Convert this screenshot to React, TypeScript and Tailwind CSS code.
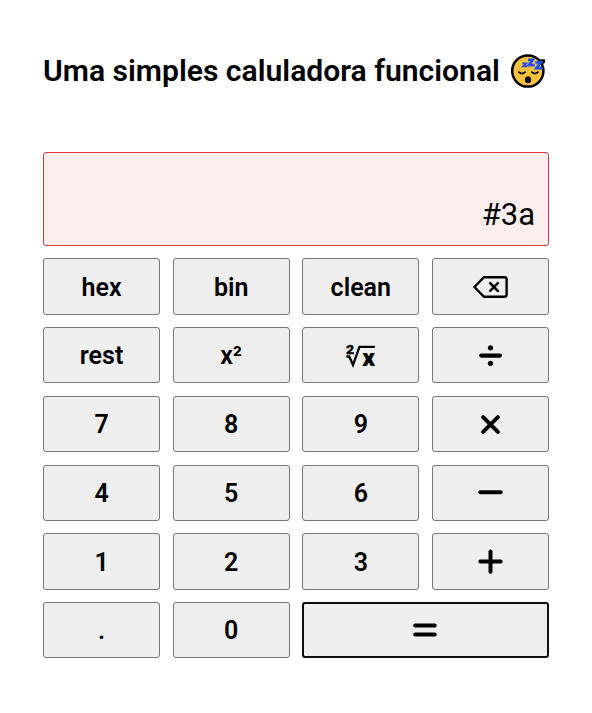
import React from "react";

const keyClass =
  "flex items-center justify-center rounded-[3px] border border-[#767676] bg-[#efefef] pt-[1.5px] text-[25px] leading-none font-semibold text-black";

const line = {
  fill: "none",
  stroke: "currentColor",
  strokeWidth: 4,
  strokeLinecap: "round" as const,
  strokeLinejoin: "round" as const,
};

function SleepingFace() {
  return (
    <svg className="size-9 shrink-0" viewBox="0 0 36 36">
      <circle cx="17.8" cy="18" r="15.6" fill="#fbc13a" stroke="#000" strokeWidth="2.5" />
      <path d="M30 6.3h4.9v3l-1.4 1.6z" fill="#000" />
      <path d="M8.9 19.2q3.1 2.8 6.2 0M21.9 19.2q3.1 2.8 6.2 0" fill="none" stroke="#000" strokeWidth="1.8" strokeLinecap="round" />
      <ellipse cx="18" cy="26.8" rx="3.1" ry="3.5" fill="#000" />
      <g fill="none" stroke="#1e50ff">
        <path d="M12.3 10.4h3.9l-3.2 2.9h4.2" strokeWidth="1.8" />
        <path d="M18 6.9h4.8l-4 5.2h5.9" strokeWidth="2.7" />
        <path d="M25.4 9.5h5.3l-4.4 5.6h6.3" strokeWidth="2.7" />
      </g>
    </svg>
  );
}

function Backspace() {
  return (
    <svg className="ml-px h-6 w-9" viewBox="0.4 0 36 24">
      <path d="M11.5 2.2h20.3q2.2 0 2.2 2.2v15.2q0 2.2-2.2 2.2H11.5L1.8 12z" {...line} strokeWidth={2.4} />
      <path d="m17.6 8.2 7.6 7.6m0-7.6-7.6 7.6" {...line} strokeWidth={2.6} />
    </svg>
  );
}

function Root() {
  return (
    <svg className="h-[34px] w-[34px] overflow-visible" viewBox="-1.5 -4.7 34 34">
      <text x="0.4" y="10.2" fontSize="13" fontWeight="900" textLength="8.2" lengthAdjust="spacingAndGlyphs" stroke="currentColor" strokeWidth="0.3">2</text>
      <path d="M.9 12.8H3.7L7.5 21.3 14 3.1h15.5" fill="none" stroke="currentColor" strokeWidth="2.3" />
      <text x="16.8" y="22.8" fontSize="23.5" fontWeight="900" textLength="12.8" lengthAdjust="spacingAndGlyphs">x</text>
    </svg>
  );
}

function Divide() {
  return (
    <svg className="ml-px size-[26px]" viewBox="0.5 0.4 26 26">
      <path d="M3.7 13h18.8" {...line} strokeWidth={4.2} />
      <circle cx="13" cy="5.2" r="2.6" />
      <circle cx="13" cy="20.7" r="2.6" />
    </svg>
  );
}

function Times() {
  return (
    <svg className="ml-px size-[26px]" viewBox="0.5 0.5 26 26">
      <path d="m5.6 5.6 14.8 14.8m0-14.8-14.8 14.8" {...line} />
    </svg>
  );
}

function Minus() {
  return (
    <svg className="ml-px size-[26px]" viewBox="0.5 0 26 26">
      <path d="M2.8 12.2h20.4" {...line} />
    </svg>
  );
}

function Plus() {
  return (
    <svg className="ml-px size-[26px]" viewBox="0.5 0 26 26">
      <path d="M2.8 12.6h20.4M13 2.4v20.4" {...line} />
    </svg>
  );
}

function Equals() {
  return (
    <svg className="mr-[2px] size-[26px]" viewBox="0 0 26 26">
      <path d="M3.2 8.4h19.6M3.2 17.5h19.6" {...line} />
    </svg>
  );
}

const keys: { id: string; face: React.ReactNode }[] = [
  { id: "hex", face: "hex" },
  { id: "bin", face: "bin" },
  { id: "clean", face: "clean" },
  { id: "backspace", face: <Backspace /> },
  { id: "rest", face: "rest" },
  { id: "square", face: "x²" },
  { id: "root", face: <Root /> },
  { id: "divide", face: <Divide /> },
  { id: "7", face: "7" },
  { id: "8", face: "8" },
  { id: "9", face: "9" },
  { id: "times", face: <Times /> },
  { id: "4", face: "4" },
  { id: "5", face: "5" },
  { id: "6", face: "6" },
  { id: "minus", face: <Minus /> },
  { id: "1", face: "1" },
  { id: "2", face: "2" },
  { id: "3", face: "3" },
  { id: "plus", face: <Plus /> },
  { id: "dot", face: "." },
  { id: "0", face: "0" },
];

export default function App() {
  return (
    <main className="flex h-[713px] w-[592px] flex-col bg-white px-[43px] pt-[49px] font-['Roboto',sans-serif] text-black">
      <header className="flex h-[103px] items-start justify-between pr-[3px]">
        <h1 className="text-[30.1px] leading-[44px] font-semibold whitespace-nowrap">Uma simples caluladora funcional</h1>
        <div className="pt-1"><SleepingFace /></div>
      </header>
      <div className="flex h-[93.75px] items-end justify-end rounded-[3px] border border-[#d83a3a] bg-[#faeeee] px-[13px] pb-[12px] text-[31px] leading-[36px] font-normal">
        #3a
      </div>
      <div className="mt-[12.5px] grid auto-rows-[56.25px] grid-cols-4 gap-[12.5px]">
        {keys.map((k) => (
          <button key={k.id} className={keyClass}>{k.face}</button>
        ))}
        <button className="col-span-2 flex items-center justify-center rounded-[3px] border-2 border-[#101010] bg-[#efefef] text-black">
          <Equals />
        </button>
      </div>
    </main>
  );
}
